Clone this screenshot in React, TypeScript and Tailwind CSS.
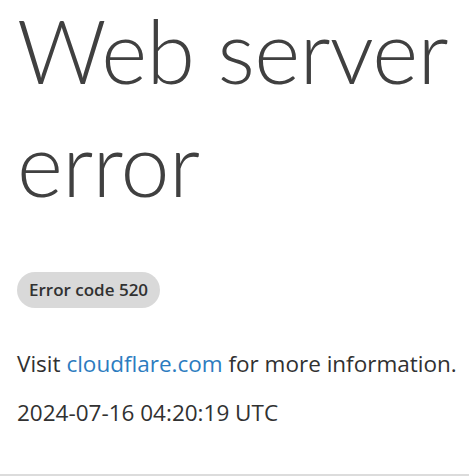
import React from "react";

const App: React.FC = () => {
  return (
    <div className="h-[476px] flex flex-col bg-white font-['Open_Sans','Noto_Sans',sans-serif]">
      {/* Main content */}
      <div className="pl-[17px] pr-[6px]">
        <h1 className="font-['Lato',sans-serif] text-[88px] leading-[113px] font-light tracking-[-0.7px] text-[#404040] mt-[-6px]">
          Web server error
        </h1>
        <div className="mt-[52px]">
          <span className="inline-flex items-center h-[36px] px-[12px] rounded-full bg-[#d9d9d9] text-[17px] font-semibold text-[#313131]">
            Error code 520
          </span>
        </div>
        <p className="mt-[40px] text-[22.5px] leading-[32px] text-[#313131]">
          Visit{" "}
          <a href="#" className="text-[#2c7cbf]">
            cloudflare.com
          </a>{" "}
          for more information.
        </p>
        <p className="mt-[17px] text-[22.5px] leading-[32px] text-[#313131]">
          2024-07-16 04:20:19 UTC
        </p>
      </div>

      {/* Footer rule */}
      <div className="mt-auto h-[2px] bg-[#dcdcdc]" />
    </div>
  );
};

export default App;
